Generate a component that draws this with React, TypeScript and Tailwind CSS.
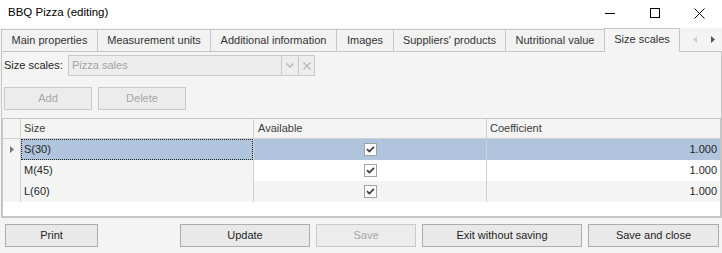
import React from "react";

const font = { fontFamily: '"Liberation Sans", Arial, sans-serif' };

function Check() {
  return (
    <div className="w-[13px] h-[13px] border border-[#a2a2a2] bg-white flex items-center justify-center">
      <svg width="11" height="11" viewBox="0 0 11 11">
        <path d="M2 5.2 L4.4 7.6 L9 2.8" fill="none" stroke="#3c3c3c" strokeWidth="1.7" />
      </svg>
    </div>
  );
}

function Btn({ label, w, disabled }: { label: string; w: string; disabled?: boolean }) {
  return (
    <div
      className={
        w +
        " h-[23px] flex items-center justify-center border " +
        (disabled
          ? "border-[#c9c9c9] bg-[#ececec] text-[#a6a6a6]"
          : "border-[#adadad] bg-[#e9e9e9] text-[#1e1e1e]")
      }
    >
      {label}
    </div>
  );
}

export default function App() {
  return (
    <div
      className="w-[722px] h-[253px] bg-[#f4f4f4] flex flex-col overflow-hidden text-[11px] text-[#262626]"
      style={font}
    >
      {/* title bar */}
      <div className="h-[28px] shrink-0 bg-white flex items-start">
        <div className="pl-[8px] h-[26px] flex items-center text-[11.5px] text-black">BBQ Pizza (editing)</div>
        <div className="ml-auto flex h-[26px]">
          <div className="w-[45px] flex items-center justify-center">
            <svg width="10" height="10" viewBox="0 0 10 10">
              <path d="M0 5.5 H10" stroke="#000" strokeWidth="1" />
            </svg>
          </div>
          <div className="w-[45px] flex items-center justify-center">
            <svg width="10" height="10" viewBox="0 0 10 10">
              <rect x="0.5" y="0.5" width="9" height="9" fill="none" stroke="#000" strokeWidth="1" />
            </svg>
          </div>
          <div className="w-[45px] flex items-center justify-center">
            <svg width="11" height="11" viewBox="0 0 11 11">
              <path d="M0.5 0.5 L10.5 10.5 M10.5 0.5 L0.5 10.5" stroke="#000" strokeWidth="1" />
            </svg>
          </div>
        </div>
      </div>

      {/* tabs */}
      <div className="h-[24px] shrink-0 flex items-end pl-[1px] text-[#333]">
        <div className="w-[96px] h-[23px] border-t border-l border-b border-[#c6c6c6] bg-[#f2f2f2] flex items-center justify-center">Main properties</div>
        <div className="w-[113px] h-[23px] border-t border-l border-b border-[#c6c6c6] bg-[#f2f2f2] flex items-center justify-center">Measurement units</div>
        <div className="w-[126px] h-[23px] border-t border-l border-b border-[#c6c6c6] bg-[#f2f2f2] flex items-center justify-center">Additional information</div>
        <div className="w-[57px] h-[23px] border-t border-l border-b border-[#c6c6c6] bg-[#f2f2f2] flex items-center justify-center">Images</div>
        <div className="w-[112px] h-[23px] border-t border-l border-b border-[#c6c6c6] bg-[#f2f2f2] flex items-center justify-center">Suppliers' products</div>
        <div className="w-[99px] h-[23px] border-t border-l border-b border-[#c6c6c6] bg-[#f2f2f2] flex items-center justify-center">Nutritional value</div>
        <div className="w-[76px] h-[24px] border-t border-l border-r border-[#c6c6c6] bg-[#f4f4f4] flex items-center justify-center pb-[2px]">Size scales</div>
        <div className="flex-1 h-[24px] border-b border-[#c6c6c6] flex items-center pl-[13px] gap-[14px] pb-[1px]">
          <svg width="4" height="7" viewBox="0 0 4 7">
            <path d="M4 0 L0 3.5 L4 7 Z" fill="#cfcfcf" />
          </svg>
          <svg width="4" height="7" viewBox="0 0 4 7">
            <path d="M0 0 L4 3.5 L0 7 Z" fill="#555" />
          </svg>
        </div>
      </div>

      {/* panel */}
      <div className="ml-[1px] h-[166px] shrink-0 border-l border-r border-b border-[#c6c6c6] flex flex-col">
        <div className="mt-[3px] h-[21px] flex items-center pl-[2px]">
          <div className="w-[64px]">Size scales:</div>
          <div className="w-[247px] h-[21px] border border-[#c9c9c9] bg-[#ededed] flex">
            <div className="flex-1 flex items-center pl-[3px] text-[#a3a3a3]">Pizza sales</div>
            <div className="w-[17px] border-l border-[#c9c9c9] flex items-center justify-center">
              <svg width="8" height="5" viewBox="0 0 8 5">
                <path d="M0.5 0.5 L4 4 L7.5 0.5" fill="none" stroke="#b5b5b5" strokeWidth="1.4" />
              </svg>
            </div>
            <div className="w-[16px] border-l border-[#c9c9c9] flex items-center justify-center">
              <svg width="8" height="8" viewBox="0 0 8 8">
                <path d="M0.5 0.5 L7.5 7.5 M7.5 0.5 L0.5 7.5" stroke="#b5b5b5" strokeWidth="1.2" />
              </svg>
            </div>
          </div>
        </div>

        <div className="mt-[11px] flex gap-[6px] pl-[2px]">
          <Btn label="Add" w="w-[88px]" disabled />
          <Btn label="Delete" w="w-[88px]" disabled />
        </div>

        {/* grid */}
        <div className="mt-[8px] h-[99px] border border-[#c6c6c6] flex flex-col bg-white">
          <div className="h-[20px] flex border-b border-[#d0d0d0] bg-[#f4f4f4] text-[#3c3c3c]">
            <div className="w-[18px] border-r border-[#d0d0d0]" />
            <div className="w-[233px] border-r border-[#d0d0d0] flex items-center pl-[3px]">Size</div>
            <div className="w-[233px] border-r border-[#d0d0d0] flex items-center pl-[4px]">Available</div>
            <div className="flex-1 flex items-center pl-[3px]">Coefficient</div>
          </div>

          <div className="h-[21px] flex">
            <div className="w-[18px] border-r border-[#d0d0d0] bg-[#f4f4f4] flex items-center pl-[7px]">
              <svg width="4" height="7" viewBox="0 0 4 7">
                <path d="M0 0 L4 3.5 L0 7 Z" fill="#777" />
              </svg>
            </div>
            <div className="w-[233px] border-r border-[#d0d0d0] bg-[#b0c4de] p-[0px]">
              <div className="h-full border border-dotted border-[#222] flex items-center pl-[2px]">S(30)</div>
            </div>
            <div className="w-[233px] border-r border-[#d0d0d0] bg-[#b0c4de] flex items-center justify-center">
              <Check />
            </div>
            <div className="flex-1 bg-[#b0c4de] flex items-center justify-end pr-[3px]">1.000</div>
          </div>

          <div className="h-[21px] flex">
            <div className="w-[18px] border-r border-[#d0d0d0] bg-[#f4f4f4]" />
            <div className="w-[233px] border-r border-[#d0d0d0] bg-[#f4f4f4] flex items-center pl-[3px]">M(45)</div>
            <div className="w-[233px] border-r border-[#d0d0d0] bg-white flex items-center justify-center">
              <Check />
            </div>
            <div className="flex-1 bg-white flex items-center justify-end pr-[3px]">1.000</div>
          </div>

          <div className="h-[21px] flex">
            <div className="w-[18px] border-r border-[#d0d0d0] bg-[#f4f4f4]" />
            <div className="w-[233px] border-r border-[#d0d0d0] bg-[#f4f4f4] flex items-center pl-[3px]">L(60)</div>
            <div className="w-[233px] border-r border-[#d0d0d0] bg-[#f4f4f4] flex items-center justify-center">
              <Check />
            </div>
            <div className="flex-1 bg-[#f4f4f4] flex items-center justify-end pr-[3px]">1.000</div>
          </div>

          <div className="flex-1 bg-white" />
        </div>
      </div>

      {/* bottom buttons */}
      <div className="mt-[6px] flex pl-[5px] pr-[3px]">
        <Btn label="Print" w="w-[93px]" />
        <div className="ml-auto flex gap-[6px]">
          <Btn label="Update" w="w-[130px]" />
          <Btn label="Save" w="w-[100px]" disabled />
          <Btn label="Exit without saving" w="w-[160px]" />
          <Btn label="Save and close" w="w-[131px]" />
        </div>
      </div>
    </div>
  );
}
